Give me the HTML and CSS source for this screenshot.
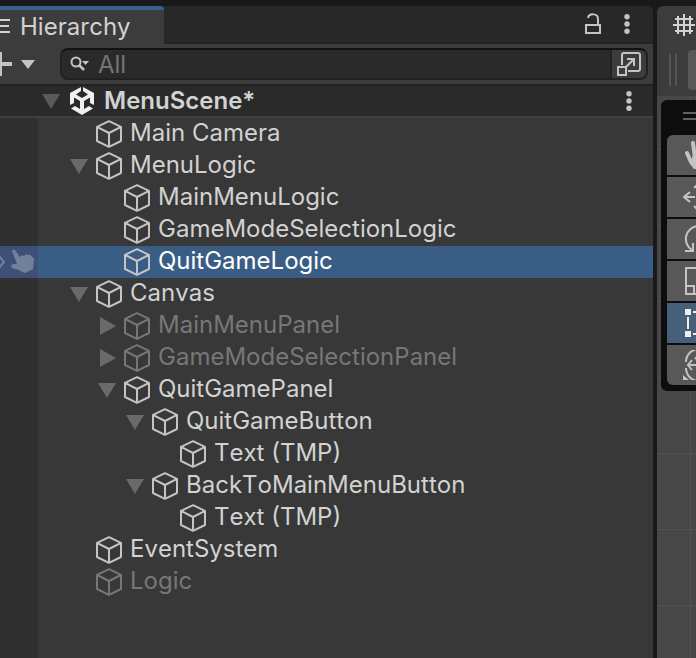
FILE: index.html
```
<!DOCTYPE html>
<html lang="en">
<head>
    <meta charset="UTF-8">
    <meta name="viewport" content="width=device-width, initial-scale=1.0">
    <title>Hierarchy</title>
    <link rel="stylesheet" href="styles.css">
</head>
<body>
    <svg class="symbols" aria-hidden="true">
        <symbol id="cube" viewBox="0 0 26 28">
            <path d="M13 1.2 L25 6.8 V21 L13 26.8 L1 21 V6.8 Z M1 6.8 L13 13 L25 6.8 M13 13 V26.8" fill="none" stroke="currentColor" stroke-width="2" stroke-linejoin="round"/>
        </symbol>
        <symbol id="open" viewBox="0 0 18 18">
            <path d="M0 2 H18 L9 17 Z" fill="currentColor"/>
        </symbol>
        <symbol id="closed" viewBox="0 0 18 18">
            <path d="M2 0 L18 9 L2 18 Z" fill="currentColor"/>
        </symbol>
        <symbol id="dots" viewBox="0 0 6 20">
            <circle cx="3" cy="2.7" r="2.7" fill="currentColor"/>
            <circle cx="3" cy="10" r="2.7" fill="currentColor"/>
            <circle cx="3" cy="17.3" r="2.7" fill="currentColor"/>
        </symbol>
    </svg>

    <div class="editor">
        <section class="hierarchy">
            <div class="tabs">
                <div class="tab">
                    <svg width="10" height="16" viewBox="0 0 10 16"><path d="M0 1 H10 M0 7 H9 M0 13 H10" stroke="currentColor" stroke-width="2"/></svg>
                    <h1>Hierarchy</h1>
                </div>
                <button class="icon-btn" aria-label="Lock">
                    <svg width="18" height="22" viewBox="0 0 18 22"><path d="M2 12 H16 V20 H2 Z M4 5 C5 0 14 0 14 6 V12" fill="none" stroke="currentColor" stroke-width="2"/></svg>
                </button>
                <button class="icon-btn" aria-label="Window menu"><svg width="6" height="20"><use href="#dots"/></svg></button>
            </div>

            <div class="toolbar">
                <button class="add-btn" aria-label="Create">
                    <svg width="36" height="24" viewBox="0 0 36 24"><path d="M0 12 H12 M0 0 V24" stroke="currentColor" stroke-width="4"/><path d="M21 8 H35 L28 17 Z" fill="currentColor"/></svg>
                </button>
                <div class="search">
                    <svg class="search-icon" width="20" height="16" viewBox="0 0 20 16"><circle cx="6" cy="6" r="4.5" fill="none" stroke="currentColor" stroke-width="2"/><path d="M9 9 L14 14" stroke="currentColor" stroke-width="2.5"/><path d="M12 5 H19 L15.500 9 Z" fill="currentColor"/></svg>
                    <input type="text" placeholder="All" aria-label="Search">
                    <button class="expand-btn" aria-label="Open in search window">
                        <svg width="24" height="24" viewBox="0 0 24 24" fill="none" stroke="currentColor" stroke-width="2"><path d="M5 13 V3 Q5 1 7 1 H21 Q23 1 23 3 V17 Q23 19 21 19 H11"/><path d="M1 15 H9 V23 H1 Z"/><path d="M9 15 L17 7 M10 7 H17 V14"/></svg>
                    </button>
                </div>
            </div>

            <div class="scene-row">
                <button class="fold" aria-label="Toggle MenuScene"><svg width="18" height="18"><use href="#open"/></svg></button>
                <svg width="24" height="28" viewBox="0 0 24 28" fill="#f0f0f0">
                    <path d="M11 0 V4 L6 7.500 L12 11 L18 7.500 L13 4 V0 L24 6 V18 L20 16 V10.500 L14 14 V22 L19 19 L23 21.500 L12 28 L1 21.500 L5 19 L10 22 V14 L4 10.500 V16 L0 18 V6 Z"/>
                </svg>
                <h2>MenuScene*</h2>
                <button class="icon-btn" aria-label="Scene menu"><svg width="6" height="20"><use href="#dots"/></svg></button>
            </div>

            <ul class="tree">
                <li class="row"><svg class="cube"><use href="#cube"/></svg>Main Camera</li>
                <li class="row"><button class="fold" aria-label="Toggle MenuLogic"><svg width="18" height="18"><use href="#open"/></svg></button><svg class="cube"><use href="#cube"/></svg>MenuLogic</li>
                <li class="row level-1"><svg class="cube"><use href="#cube"/></svg>MainMenuLogic</li>
                <li class="row level-1"><svg class="cube"><use href="#cube"/></svg>GameModeSelectionLogic</li>
                <li class="row level-1 selected">
                    <span class="picking">
                        <svg width="38" height="32" viewBox="0 0 38 32"><path d="M-1 10 L4 16 L-1 22" fill="none" stroke="currentColor" stroke-width="2"/><path d="M12 5 Q13 3 15 4 L20 11 Q22 8 24 10 Q26 7 28 9 Q31 8 32 11 Q34 11 34 14 L33 23 L25 27 Q21 26 19 24 L12 22 Q10 19 13 18 L17 18 Z" fill="currentColor"/></svg>
                    </span>
                    <svg class="cube"><use href="#cube"/></svg>QuitGameLogic
                </li>
                <li class="row"><button class="fold" aria-label="Toggle Canvas"><svg width="18" height="18"><use href="#open"/></svg></button><svg class="cube"><use href="#cube"/></svg>Canvas</li>
                <li class="row level-1 inactive"><button class="fold" aria-label="Toggle MainMenuPanel"><svg width="18" height="18"><use href="#closed"/></svg></button><svg class="cube"><use href="#cube"/></svg>MainMenuPanel</li>
                <li class="row level-1 inactive"><button class="fold" aria-label="Toggle GameModeSelectionPanel"><svg width="18" height="18"><use href="#closed"/></svg></button><svg class="cube"><use href="#cube"/></svg>GameModeSelectionPanel</li>
                <li class="row level-1"><button class="fold" aria-label="Toggle QuitGamePanel"><svg width="18" height="18"><use href="#open"/></svg></button><svg class="cube"><use href="#cube"/></svg>QuitGamePanel</li>
                <li class="row level-2"><button class="fold" aria-label="Toggle QuitGameButton"><svg width="18" height="18"><use href="#open"/></svg></button><svg class="cube"><use href="#cube"/></svg>QuitGameButton</li>
                <li class="row level-3"><svg class="cube"><use href="#cube"/></svg>Text (TMP)</li>
                <li class="row level-2"><button class="fold" aria-label="Toggle BackToMainMenuButton"><svg width="18" height="18"><use href="#open"/></svg></button><svg class="cube"><use href="#cube"/></svg>BackToMainMenuButton</li>
                <li class="row level-3"><svg class="cube"><use href="#cube"/></svg>Text (TMP)</li>
                <li class="row"><svg class="cube"><use href="#cube"/></svg>EventSystem</li>
                <li class="row inactive"><svg class="cube"><use href="#cube"/></svg>Logic</li>
            </ul>
        </section>

        <section class="scene">
            <div class="scene-tab">
                <svg width="22" height="22" viewBox="0 0 22 22"><path d="M5 2 V20 M11 0 V22 M17 2 V20 M2 5 H20 M0 11 H22 M2 17 H20" stroke="currentColor" stroke-width="2" fill="none"/></svg>
            </div>
            <div class="scene-toolbar">
                <span class="grip"></span>
                <button class="pivot-btn" aria-label="Pivot"></button>
            </div>
            <div class="viewport">
                <div class="tools">
                    <div class="tools-handle"></div>
                    <button class="tool" aria-label="View"><svg width="30" height="30" viewBox="0 0 30 30"><path d="M3 13 L7 22 L11 27 M9 3 L11 18 M15 2 V18 M21 4 L19 18 M26 10 L23 20" stroke="currentColor" stroke-width="4" stroke-linecap="round"/><path d="M9 15 H24 V23 L20 29 H12 L7 21 Z" fill="currentColor"/></svg></button>
                    <button class="tool" aria-label="Move"><svg width="32" height="30" viewBox="0 0 32 30" fill="none" stroke="currentColor" stroke-width="2"><path d="M1 15 H12 M20 15 H31 M16 0 V11 M16 19 V30 M7 10 L1 15 L7 20 M25 10 L31 15 L25 20 M11 6 L16 1 L21 6 M11 24 L16 29 L21 24"/></svg></button>
                    <button class="tool" aria-label="Rotate"><svg width="30" height="30" viewBox="0 0 30 30" fill="none" stroke="currentColor" stroke-width="2"><path d="M14 2 A13 13 0 0 0 8 26 M1 27 H9 V19 M16 28 A13 13 0 0 0 22 4 M29 3 H21 V11"/></svg></button>
                    <button class="tool" aria-label="Scale"><svg width="30" height="30" viewBox="0 0 30 30" fill="none" stroke="currentColor" stroke-width="2"><path d="M2 20 V2 H28 V28 H10 M2 20 H10 V28 H2 Z"/></svg></button>
                    <button class="tool active" aria-label="Rect"><svg width="30" height="30" viewBox="0 0 30 30"><path d="M1 1 H7 V7 H1 Z M23 1 H29 V7 H23 Z M1 23 H7 V29 H1 Z M23 23 H29 V29 H23 Z" fill="currentColor"/><path d="M4 9 V21 M26 9 V21 M9 4 H21 M9 26 H21" stroke="currentColor" stroke-width="2"/></svg></button>
                    <button class="tool" aria-label="Transform"><svg width="34" height="30" viewBox="0 0 34 30" fill="none" stroke="currentColor" stroke-width="2"><path d="M4 12 A13 13 0 0 1 30 12 M4 18 A13 13 0 0 0 30 18 M6 15 H15 M10 10 L6 15 L10 20 M17 5 V25 M13 9 L17 5 L21 9"/><path d="M1 25 L7 30 H1 Z" fill="currentColor" stroke="none"/></svg></button>
                </div>
            </div>
        </section>
    </div>
</body>
</html>
```
FILE: styles.css
```
* {
    box-sizing: border-box;
}
body {
    margin: 0;
    background-color: #191919;
    color: #d2d2d2;
    font-family: Inter, "Liberation Sans", sans-serif;
    font-size: 24px;
    font-kerning: none;
}
h1, h2 {
    margin: 0;
    padding-bottom: 2px;
    font-size: 24px;
    font-weight: normal;
}
button {
    border: none;
    padding: 0;
    background: none;
    color: #c4c4c4;
    display: flex;
    align-items: center;
    justify-content: center;
}
svg {
    flex-shrink: 0;
}
.symbols {
    position: absolute;
    width: 0;
    height: 0;
}
.editor {
    display: flex;
    gap: 4px;
    min-height: 100vh;
    padding-top: 6px;
}

/* Hierarchy window */
.hierarchy {
    flex: 1;
    min-width: 0;
    display: flex;
    flex-direction: column;
    background-color: #383838;
    border-top-right-radius: 6px;
}
.tabs {
    display: flex;
    align-items: center;
    gap: 22px;
    height: 38px;
    padding-right: 23px;
    background-color: #282828;
    border-bottom: 2px solid #232323;
    border-top-right-radius: 6px;
}
.tab {
    display: flex;
    align-items: center;
    gap: 10px;
    width: 164px;
    height: 38px;
    margin: 0 auto -2px 0;
    background-color: #3c3c3c;
    border-top: 4px solid #3a5f8a;
    border-top-right-radius: 4px;
}
.icon-btn {
    min-width: 6px;
    height: 24px;
}
.toolbar {
    display: flex;
    align-items: center;
    gap: 24px;
    height: 40px;
    padding-right: 5px;
    background-color: #3c3c3c;
}
.search {
    flex: 1;
    min-width: 0;
    display: flex;
    align-items: center;
    height: 32px;
    background-color: #2a2a2a;
    border: 2px solid #212121;
    border-top-color: #121212;
    border-radius: 8px;
    overflow: hidden;
}
.search-icon {
    margin-left: 8px;
    color: #c4c4c4;
}
.search input {
    flex: 1;
    min-width: 0;
    height: 28px;
    padding: 0 8px;
    border: none;
    outline: none;
    background: none;
    color: #d2d2d2;
    font: inherit;
}
.search input::placeholder {
    color: #757575;
}
.expand-btn {
    width: 36px;
    height: 28px;
    background-color: #3c3c3c;
    border-left: 2px solid #212121;
}
.scene-row {
    display: flex;
    align-items: center;
    gap: 10px;
    height: 34px;
    padding: 0 21px 0 42px;
    background-color: #2a2a2a;
    border-top: 2px solid #222222;
    border-bottom: 2px solid #3f3f3f;
}
.scene-row h2 {
    flex: 1;
    font-weight: 600;
}
.fold {
    width: 18px;
    height: 18px;
    color: #6a6a6a;
}
.scene-row .fold {
    color: #5a5a5a;
}

/* Object list, with the picking column down its left side */
.tree {
    flex: 1;
    margin: 0;
    padding: 0;
    list-style: none;
    background: linear-gradient(to right, #303030 38px, #383838 38px);
}
.row {
    position: relative;
    display: flex;
    align-items: center;
    height: 32px;
    padding-left: 96px;
    line-height: 30px;
    padding-bottom: 2px;
    white-space: nowrap;
}
.row .fold {
    margin: 2px 8px 0 -26px;
}
.cube {
    width: 26px;
    height: 28px;
    margin: 2px 8px 0 0;
    color: #c4c4c4;
}
.level-1 {
    padding-left: 124px;
}
.level-2 {
    padding-left: 152px;
}
.level-3 {
    padding-left: 180px;
}
.inactive, .inactive .cube {
    color: #777777;
}
.selected {
    background: linear-gradient(to right, #3e5077 38px, #3a5d85 38px);
    color: #ffffff;
}
.picking {
    position: absolute;
    left: 0;
    top: 0;
    height: 32px;
    color: #71819c;
}

/* Scene window */
.scene {
    width: 39px;
    display: flex;
    flex-direction: column;
    overflow: hidden;
    background-color: #3c3c3c;
    border-top-left-radius: 6px;
}
.scene-tab {
    display: flex;
    align-items: center;
    height: 38px;
    padding-left: 16px;
    color: #d2d2d2;
}
.scene-toolbar {
    display: flex;
    align-items: center;
    gap: 11px;
    height: 52px;
    padding-left: 12px;
}
.grip {
    flex-shrink: 0;
    width: 8px;
    height: 32px;
    border: 2px solid #555555;
    border-width: 0 2px;
}
.pivot-btn {
    flex-shrink: 0;
    width: 64px;
    height: 40px;
    background-color: #585858;
    border-radius: 4px;
}
.viewport {
    position: relative;
    flex: 1;
    background-color: #474747;
    background-image: linear-gradient(#525252 1px, transparent 1px), linear-gradient(to right, #525252 1px, transparent 1px);
    background-size: 76px 76px;
    background-position: 33px 53px;
}
.tools {
    position: absolute;
    left: 4px;
    top: 4px;
    width: 76px;
    display: flex;
    flex-direction: column;
    gap: 2px;
    padding: 0 6px 6px;
    background-color: #0d0d0d;
    border-radius: 6px;
}
.tools-handle {
    align-self: center;
    width: 32px;
    height: 8px;
    margin: 12px 0 13px;
    border: 2px solid #606060;
    border-width: 2px 0;
}
.tool {
    height: 40px;
    background-color: #585858;
}
.tool:nth-child(2) {
    border-radius: 6px 6px 0 0;
}
.tool:last-child {
    border-radius: 0 0 6px 6px;
}
.tool.active {
    background-color: #46607c;
    color: #eeeeee;
}
```
